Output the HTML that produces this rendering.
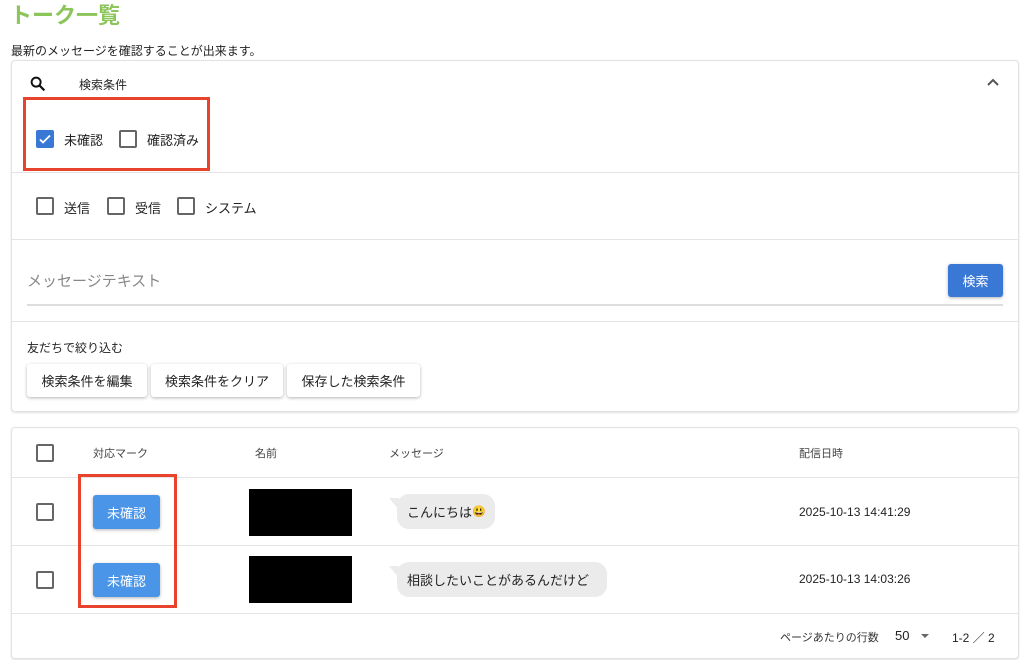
<!DOCTYPE html>
<html><head><meta charset="utf-8"><style>
*{box-sizing:border-box;margin:0;padding:0}
body{width:1024px;height:660px;background:#fff;position:relative;overflow:hidden;font-family:"Liberation Sans","Noto Sans CJK JP",sans-serif;color:#222}
.a{position:absolute;white-space:nowrap}
.panel{position:absolute;border:1px solid #e2e2e2;border-radius:4px;box-shadow:0 1px 2px rgba(0,0,0,.12);background:#fff}
.hr{position:absolute;height:1px;background:#e4e4e4}
.cb{position:absolute;width:18px;height:18px;border:2px solid #666;border-radius:2px;background:#fff}
.t12{font-size:12px}
.t13{font-size:13px}
.btn{position:absolute;height:33px;border-radius:3px;box-shadow:0 1px 3px rgba(0,0,0,.3);font-size:13px;display:flex;align-items:center;justify-content:center;background:#fff;color:#222}
.blue{background:#4a95e8;color:#fff;box-shadow:0 1px 3px rgba(0,0,0,.3)}
.bub{position:absolute;height:35px;background:#ebebeb;border-radius:12px;font-size:13px;display:flex;align-items:center;padding-left:10px;color:#222}
.bub:before{content:"";position:absolute;left:-8px;top:4px;border-top:0 solid transparent;border-right:10px solid #ebebeb;border-bottom:12px solid transparent}
.red{position:absolute;border:3px solid #e8432d}
</style></head><body>
<div class="a" style="left:10px;top:-2px;font-size:22px;font-weight:bold;color:#8cc55a">トーク一覧</div>
<div class="a t12" style="left:11px;top:42px">最新のメッセージを確認することが出来ます。</div>

<div class="panel" style="left:11px;top:60px;width:1008px;height:352px"></div>
<svg class="a" style="left:29px;top:75px" width="18" height="18" viewBox="0 0 24 24"><circle cx="9.5" cy="9.5" r="6" fill="none" stroke="#111" stroke-width="2.6"/><path d="M14 14l6.5 6.5" stroke="#111" stroke-width="3"/></svg>
<div class="a t12" style="left:79px;top:76px">検索条件</div>
<svg class="a" style="left:986px;top:77px" width="14" height="10" viewBox="0 0 14 10"><path d="M2 8l5-5 5 5" fill="none" stroke="#555" stroke-width="2"/></svg>

<div class="red" style="left:23px;top:97px;width:187px;height:74px"></div>
<div class="cb" style="left:36px;top:130px;background:#3a78d6;border-color:#3a78d6"></div>
<svg class="a" style="left:38px;top:132px" width="14" height="14" viewBox="0 0 14 14"><path d="M2 7.5l3 3 7-7" fill="none" stroke="#fff" stroke-width="1.8"/></svg>
<div class="a t13" style="left:64px;top:130px">未確認</div>
<div class="cb" style="left:119px;top:130px"></div>
<div class="a t13" style="left:147px;top:130px">確認済み</div>
<div class="hr" style="left:12px;top:172px;width:1006px"></div>

<div class="cb" style="left:36px;top:197px"></div><div class="a t13" style="left:64px;top:198px">送信</div>
<div class="cb" style="left:107px;top:197px"></div><div class="a t13" style="left:135px;top:198px">受信</div>
<div class="cb" style="left:177px;top:197px"></div><div class="a t13" style="left:205px;top:198px">システム</div>
<div class="hr" style="left:12px;top:239px;width:1006px"></div>

<div class="a" style="left:27px;top:270px;font-size:15px;color:#888">メッセージテキスト</div>
<div class="a" style="left:27px;top:304px;width:976px;height:2px;background:#ddd"></div>
<div class="btn" style="left:948px;top:264px;width:55px;background:#3a78d6;color:#fff">検索</div>
<div class="hr" style="left:12px;top:321px;width:1006px"></div>

<div class="a t12" style="left:27px;top:339px">友だちで絞り込む</div>
<div class="btn" style="left:27px;top:364px;width:120px">検索条件を編集</div>
<div class="btn" style="left:151px;top:364px;width:132px">検索条件をクリア</div>
<div class="btn" style="left:287px;top:364px;width:133px">保存した検索条件</div>

<div class="panel" style="left:11px;top:427px;width:1008px;height:232px"></div>
<div class="cb" style="left:36px;top:444px"></div>
<div class="a" style="left:93px;top:445px;font-size:11px;color:#444">対応マーク</div>
<div class="a" style="left:255px;top:445px;font-size:11px;color:#444">名前</div>
<div class="a" style="left:389px;top:445px;font-size:11px;color:#444">メッセージ</div>
<div class="a" style="left:799px;top:445px;font-size:11px;color:#444">配信日時</div>
<div class="hr" style="left:12px;top:477px;width:1006px"></div>
<div class="hr" style="left:12px;top:545px;width:1006px"></div>
<div class="hr" style="left:12px;top:613px;width:1006px"></div>

<div class="cb" style="left:36px;top:503px"></div>
<div class="btn blue" style="left:93px;top:495px;width:67px;height:34px">未確認</div>
<div class="a" style="left:249px;top:489px;width:103px;height:47px;background:#000"></div>
<div class="bub" style="left:397px;top:494px;width:98px">こんにちは<span style="font-size:11px">😃</span></div>
<div class="a t12" style="left:799px;top:505px">2025-10-13 14:41:29</div>

<div class="cb" style="left:36px;top:571px"></div>
<div class="btn blue" style="left:93px;top:563px;width:67px;height:34px">未確認</div>
<div class="a" style="left:249px;top:556px;width:103px;height:47px;background:#000"></div>
<div class="bub" style="left:397px;top:562px;width:210px">相談したいことがあるんだけど</div>
<div class="a t12" style="left:799px;top:572px">2025-10-13 14:03:26</div>

<div class="red" style="left:78px;top:474px;width:99px;height:134px"></div>

<div class="a" style="left:780px;top:629px;font-size:11px;color:#333">ページあたりの行数</div>
<div class="a" style="left:895px;top:628px;font-size:13px">50</div>
<div class="a" style="left:921px;top:634px;border-left:4px solid transparent;border-right:4px solid transparent;border-top:4px solid #666"></div>
<div class="a" style="left:952px;top:629px;font-size:12px">1-2 ／ 2</div>
</body></html>
